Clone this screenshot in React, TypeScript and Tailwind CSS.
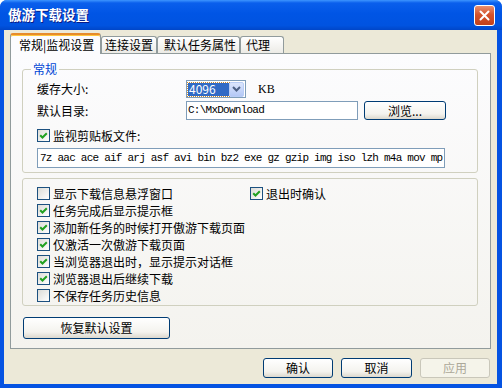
import React from 'react';

const cjk = "font-['Noto_Sans_CJK_SC','Liberation_Sans',sans-serif]";
const mono = "font-['Liberation_Mono','Noto_Sans_CJK_SC',monospace]";

function Check({ checked }: { checked?: boolean }) {
  return (
    <span className="flex h-[13px] w-[13px] shrink-0 items-center justify-center border border-[#1C5180] bg-[linear-gradient(135deg,#DCDCD7,#FFFFFF)]">
      {checked && (
        <svg width="11" height="11" viewBox="0 0 11 11">
          <path d="M2.2 5.2l2.3 2.3L8.8 3.2" fill="none" stroke="#21A121" strokeWidth="2" />
        </svg>
      )}
    </span>
  );
}

function Opt({ label, checked }: { label: string; checked?: boolean }) {
  return (
    <div className="flex h-[17px] items-center gap-[3px]">
      <Check checked={checked} />
      <span className="leading-[17px]">{label}</span>
    </div>
  );
}

function XpButton({ label, className, disabled }: { label: string; className: string; disabled?: boolean }) {
  return (
    <div
      className={
        'flex items-center justify-center rounded-[3px] border leading-none ' +
        (disabled
          ? 'border-[#C9C7BA] bg-[#F5F4EA] text-[#ACA899] '
          : 'border-[#003C74] bg-[linear-gradient(180deg,#FFFFFF_0%,#F4F3EE_70%,#DCD8CD_100%)] text-black ') +
        className
      }
    >
      {label}
    </div>
  );
}

export default function App() {
  const tabs = [
    { label: '常规|监视设置', w: 'w-[91px] pl-[8px]', active: true },
    { label: '连接设置', w: 'w-[56px] pl-[3px]' },
    { label: '默认任务属性', w: 'w-[83px] pl-[6px]' },
    { label: '代理', w: 'w-[44px] pl-[5px]' },
  ];

  const options: [string, boolean][] = [
    ['任务完成后显示提示框', true],
    ['添加新任务的时候打开傲游下载页面', true],
    ['仅激活一次傲游下载页面', true],
    ['当浏览器退出时，显示提示对话框', true],
    ['浏览器退出后继续下载', true],
    ['不保存任务历史信息', false],
  ];

  return (
    <div className={'h-[388px] w-[502px] bg-white text-[12px] text-black ' + cjk}>
      <div className="flex h-full flex-col overflow-hidden rounded-t-[7px] bg-[#0553E2]">
        {/* title bar */}
        <div className="flex h-[30px] shrink-0 items-center bg-[linear-gradient(180deg,#3D95FF_0%,#0A5FEC_10%,#0055E5_45%,#0053E0_85%,#0046C8_100%)] pl-[8px] pr-[7px]">
          <span className="text-[13.5px] font-bold leading-none text-white [text-shadow:1px_1px_0_#0A1A86]">傲游下载设置</span>
          <div className="ml-auto flex h-[21px] w-[21px] items-center justify-center rounded-[3px] border border-white bg-[linear-gradient(180deg,#E9906F,#D5532C_45%,#C2401B)]">
            <svg width="11" height="11" viewBox="0 0 11 11">
              <path d="M1.5 1.5l8 8M9.5 1.5l-8 8" stroke="white" strokeWidth="2" strokeLinecap="round" />
            </svg>
          </div>
        </div>

        {/* client */}
        <div className="mb-[4px] ml-[4px] mr-[5px] flex flex-1 flex-col bg-[#ECE9D8] px-[6px] pt-[3px]">
          <div className="flex h-[20px] items-end">
            {tabs.map((t) =>
              t.active ? (
                <div
                  key={t.label}
                  className={'relative z-10 -mb-px flex h-[21px] items-center rounded-t-[3px] border-x border-t-2 border-x-[#919B9C] border-t-[#E68B2C] bg-[#FCFCFE] leading-none [box-shadow:inset_0_1px_0_#FFC73C] ' + t.w}
                >
                  {t.label}
                </div>
              ) : (
                <div
                  key={t.label}
                  className={'flex h-[17px] items-center rounded-t-[3px] border-x border-t border-[#919B9C] bg-[linear-gradient(180deg,#FFFFFF,#ECEBE6)] leading-none ' + t.w}
                >
                  {t.label}
                </div>
              )
            )}
          </div>

          {/* tab panel */}
          <div className="flex flex-col border border-[#919B9C] bg-[linear-gradient(180deg,#FCFCFE,#F4F3EE)] pb-[9px] pl-[11px] pr-[12px] pt-[15px]">
            {/* group 1 */}
            <div className="relative flex flex-col rounded-[3px] border border-[#D0D0BF] pb-[4px] pl-[14px] pt-[10px]">
              <span className="absolute left-[8px] top-[-8px] bg-[#FCFCFE] px-[2px] leading-[14px] text-[#0046D5]">常规</span>
              <div className="flex h-[18px] items-center">
                <span className="w-[149px]">缓存大小:</span>
                <div className="flex h-[18px] w-[60px] items-center border border-[#7F9DB9] bg-white pl-[1px] pr-[1px]">
                  <span className="flex h-[13px] w-[41px] items-center bg-[#316AC5] pl-[1px] text-[12px] leading-none text-white outline outline-1 outline-dotted outline-[#CE8B2C] -outline-offset-0">4096</span>
                  <div className="ml-auto flex h-[15px] w-[15px] items-center justify-center rounded-[2px] border border-[#B9CDF6] bg-[linear-gradient(180deg,#DCE6FD,#B4C8F6)]">
                    <svg width="9" height="6" viewBox="0 0 9 6">
                      <path d="M1 1l3.5 3.5L8 1" fill="none" stroke="#4D6185" strokeWidth="2" />
                    </svg>
                  </div>
                </div>
                <span className="ml-[12px] font-['Liberation_Serif',serif] text-[12px]">KB</span>
              </div>
              <div className="mt-[3px] flex h-[19px] items-center">
                <span className="w-[149px]">默认目录:</span>
                <div className={'flex h-[19px] w-[172px] items-center border border-[#7F9DB9] bg-white pl-[1px] text-[11px] tracking-[-0.75px] ' + mono}>
                  C:\MxDownload
                </div>
                <XpButton label="浏览..." className="ml-[6px] h-[19px] w-[82px]" />
              </div>
              <div className="mt-[7px]">
                <Opt label="监视剪贴板文件:" checked />
              </div>
              <div className={'mt-[4px] flex h-[20px] w-[408px] items-center whitespace-nowrap border border-[#7F9DB9] bg-white pl-[2px] text-[11px] tracking-[-0.77px] ' + mono}>
                7z aac ace aif arj asf avi bin bz2 exe gz gzip img iso lzh m4a mov mp
              </div>
            </div>

            {/* group 2 */}
            <div className="mt-[5px] flex flex-col rounded-[3px] border border-[#D0D0BF] pb-[1px] pl-[14px] pt-[6px]">
              <div className="flex">
                <div className="w-[213px]">
                  <Opt label="显示下载信息悬浮窗口" />
                </div>
                <Opt label="退出时确认" checked />
              </div>
              {options.map(([label, checked]) => (
                <Opt key={label} label={label} checked={checked} />
              ))}
            </div>

            <XpButton label="恢复默认设置" className="ml-[1px] mt-[11px] h-[22px] w-[147px]" />
          </div>

          {/* dialog buttons */}
          <div className="mr-[1px] mt-[9px] flex justify-end gap-[8px]">
            <XpButton label="确认" className="h-[20px] w-[70px]" />
            <XpButton label="取消" className="h-[20px] w-[71px]" />
            <XpButton label="应用" className="h-[20px] w-[70px]" disabled />
          </div>
        </div>
      </div>
    </div>
  );
}
